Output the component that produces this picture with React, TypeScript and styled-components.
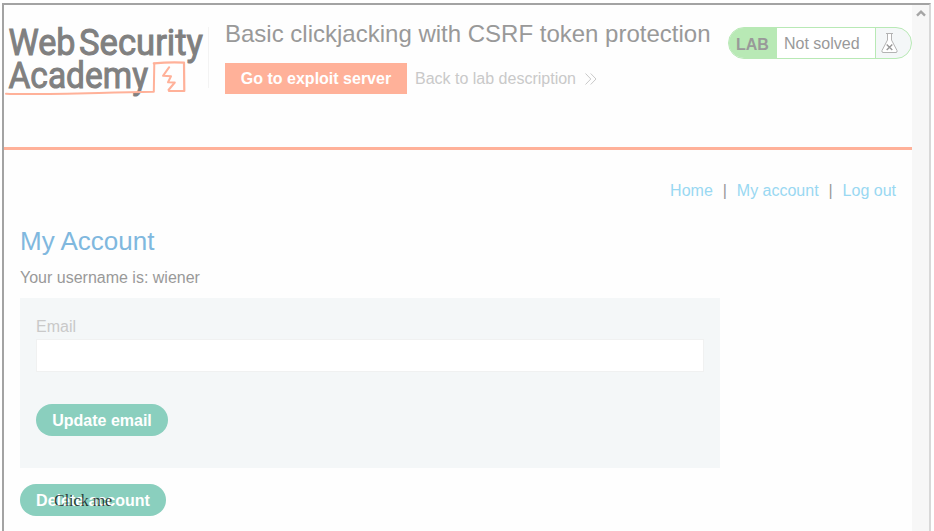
import React from "react";
import styled, { createGlobalStyle } from "styled-components";

const GlobalStyle = createGlobalStyle`
  * { box-sizing: border-box; }
  html, body { margin: 0; height: 100%; overflow: hidden; background: #fff; }
  body { font-family: "Liberation Sans", Arial, sans-serif; font-size: 16px; color: #999; }
`;

const Stage = styled.div`
  position: relative;
  height: 531px;
  width: 934px;
  padding: 3px 3px 0 2px;
  overflow: hidden;
`;

const Frame = styled.div`
  display: flex;
  height: 560px;
  border: 2px solid #a3a3a3;
  border-right-color: #d8d8d8;
  background: #fefefe;
`;

const Page = styled.div`
  flex: 1;
  min-width: 0;
`;

const Scrollbar = styled.div`
  width: 17px;
  background: #f7f7f7;
  display: flex;
  justify-content: center;
  padding-top: 4px;
`;

const Header = styled.header`
  display: flex;
  align-items: flex-start;
  height: 145px;
  padding-top: 14px;
  border-bottom: 3px solid #ffb199;
`;

const LogoArea = styled.div`
  width: 204px;
  height: 78px;
  padding-top: 3px;
  flex: none;
`;

const Divider = styled.div`
  width: 1px;
  height: 61px;
  margin: 8px 16px 0 0;
  background: #f3f3f3;
`;

const LabInfo = styled.div`
  flex: 1;
  min-width: 0;
`;

const Title = styled.h2`
  margin: 0;
  font-size: 24px;
  font-weight: 400;
  line-height: 30px;
  white-space: nowrap;
`;

const Actions = styled.div`
  display: flex;
  align-items: center;
  gap: 8px;
  margin-top: 14px;
`;

const ExploitButton = styled.a`
  width: 182px;
  height: 31px;
  line-height: 31px;
  text-align: center;
  font-weight: 700;
  color: #fff;
  background: #ffb199;
`;

const BackLink = styled.a`
  display: flex;
  align-items: center;
  gap: 9px;
  color: #c9c9c9;
`;

const Status = styled.div`
  display: flex;
  width: 184px;
  height: 32px;
  margin-top: 8px;
  flex: none;
  border: 1px solid #b8e9b5;
  border-radius: 16px;
  overflow: hidden;
  line-height: 31px;
  background: #f4f7f8;
`;

const StatusLabel = styled.div`
  width: 48px;
  padding-left: 7px;
  font-weight: 700;
  line-height: 33px;
  background: #b8e9b5;
`;

const StatusText = styled.div`
  width: 99px;
  padding-left: 7px;
  background: #fff;
  border-right: 1px solid #b8e9b5;
`;

const StatusIcon = styled.div`
  padding: 4px 0 0 5px;
  line-height: 0;
`;

const Nav = styled.nav`
  display: flex;
  justify-content: flex-end;
  padding: 32px 16px 0 0;
  line-height: 18px;
`;

const NavLink = styled.a`
  color: #99d8f2;
`;

const Separator = styled.span`
  width: 24px;
  text-align: center;
`;

const Content = styled.main`
  padding: 24px 16px 0;
`;

const Heading = styled.h1`
  margin: 0;
  font-size: 26px;
  font-weight: 400;
  line-height: 34px;
  color: #80b8de;
`;

const Username = styled.p`
  margin: 11px 0 0;
  line-height: 18px;
`;

const EmailForm = styled.form`
  width: 700px;
  height: 170px;
  margin: 11px 0 16px;
  padding: 19px 16px 0;
  background: #f4f7f8;
`;

const Label = styled.label`
  display: block;
  line-height: 19px;
  color: #c9c9c9;
`;

const Input = styled.input`
  display: block;
  width: 668px;
  height: 33px;
  margin: 3px 0 32px;
  padding: 0 8px;
  border: 1px solid #f0f1f1;
  background: #fff;
  font: inherit;
`;

const PillButton = styled.button<{ $width: number }>`
  display: block;
  width: ${(p) => p.$width}px;
  height: 32px;
  padding: 2px 0 0;
  border: 0;
  border-radius: 16px;
  background: #8acfbe;
  color: #fff;
  font: 700 16px "Liberation Sans", Arial, sans-serif;
`;

const Decoy = styled.div`
  position: absolute;
  left: 54px;
  top: 492px;
  font: 16px/18px "Liberation Serif", "Times New Roman", serif;
  color: rgba(0, 0, 0, 0.75);
`;

const AcademyLogo = () => (
  <svg width="204" height="75" viewBox="4 22 204 75" role="img" aria-label="Web Security Academy">
    <g fill="#808080" stroke="#808080" strokeWidth="1" fontFamily="Roboto, sans-serif" fontWeight="400" fontSize="37">
      <text x="8.5" y="55.2" textLength="67" lengthAdjust="spacingAndGlyphs">Web</text>
      <text x="79" y="55.2" textLength="124" lengthAdjust="spacingAndGlyphs">Security</text>
      <text x="8.5" y="88" textLength="139.5" lengthAdjust="spacingAndGlyphs">Academy</text>
    </g>
    <g fill="none" stroke="#ffb199" strokeLinecap="round" strokeLinejoin="round">
      <path strokeWidth="2" d="M6 93.7 C32 95 70 93.5 153.8 91.8 L154.3 63.5" />
      <path strokeWidth="2.2" d="M153.8 63.4 Q170 61.8 184 62.6 L184.3 91 L169 91" />
      <path strokeWidth="2" d="M169.2 67.2 L163 75.8 L171 76.3 L168 82.3 L174.8 82.5 L168.5 90" />
    </g>
  </svg>
);

const Chevrons = () => (
  <svg width="12" height="12" viewBox="0 0 12 12" fill="none" stroke="#c9c9c9" strokeWidth="1">
    <path d="M0.5 0.5 L5.8 6 L0.5 11.5 M5.7 0.5 L11 6 L5.7 11.5" />
  </svg>
);

const Flask = () => (
  <svg width="17" height="22" viewBox="0 0 17 22" fill="none" stroke="#b3b3b3">
    <path fill="#fff" d="M5 1.5 H12 M6.5 1.5 V8 L1 18.5 Q0.5 20.5 2 20.5 H15 Q16.5 20.5 16 18.5 L10.5 8 V1.5" />
    <path stroke="#999" strokeWidth="1.4" d="M5.7 12.5 L11.3 18 M11.3 12.5 L5.7 18" />
  </svg>
);

const ScrollArrow = () => (
  <svg width="10" height="8" viewBox="0 0 10 8" fill="none" stroke="#a5a5a5" strokeWidth="2.4">
    <path d="M1 6.7 L5 2.7 L9 6.7" />
  </svg>
);

export default function App() {
  return (
    <>
      <GlobalStyle />
      <Stage>
        <Frame>
          <Page>
            <Header>
              <LogoArea><AcademyLogo /></LogoArea>
              <Divider />
              <LabInfo>
                <Title>Basic clickjacking with CSRF token protection</Title>
                <Actions>
                  <ExploitButton>Go to exploit server</ExploitButton>
                  <BackLink>Back to lab description <Chevrons /></BackLink>
                </Actions>
              </LabInfo>
              <Status>
                <StatusLabel>LAB</StatusLabel>
                <StatusText>Not solved</StatusText>
                <StatusIcon><Flask /></StatusIcon>
              </Status>
            </Header>
            <Nav>
              <NavLink>Home</NavLink>
              <Separator>|</Separator>
              <NavLink>My account</NavLink>
              <Separator>|</Separator>
              <NavLink>Log out</NavLink>
            </Nav>
            <Content>
              <Heading>My Account</Heading>
              <Username>Your username is: wiener</Username>
              <EmailForm>
                <Label htmlFor="email">Email</Label>
                <Input id="email" type="email" />
                <PillButton type="button" $width={132}>Update email</PillButton>
              </EmailForm>
              <PillButton type="button" $width={146}>Delete account</PillButton>
            </Content>
          </Page>
          <Scrollbar><ScrollArrow /></Scrollbar>
        </Frame>
        <Decoy>Click me</Decoy>
      </Stage>
    </>
  );
}
